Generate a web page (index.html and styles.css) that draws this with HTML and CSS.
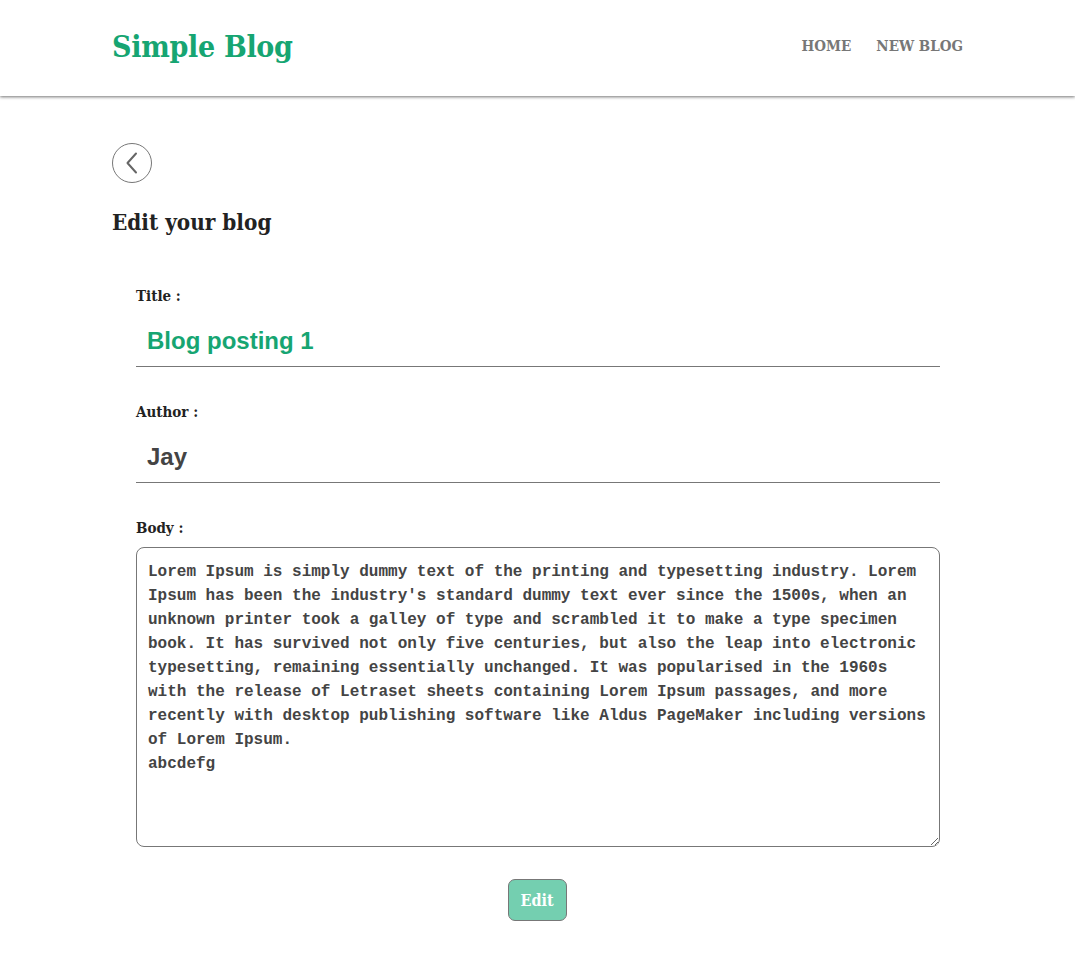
FILE: index.html
```html
<!DOCTYPE html>
<html lang="en">
<head>
<meta charset="utf-8">
<title>Simple Blog</title>
<link rel="stylesheet" href="styles.css">
</head>
<body>
<header class="navbar">
  <div class="container nav-inner">
    <a class="logo" href="#">Simple Blog</a>
    <nav class="links">
      <a href="#">HOME</a>
      <a href="#">NEW BLOG</a>
    </nav>
  </div>
</header>
<main class="container content">
  <button class="back" type="button" aria-label="Back">
    <svg width="40" height="40" viewBox="0 0 40 40"><path d="M24 10.5 L15.5 20 L24 29.5" fill="none" stroke="#666" stroke-width="2" stroke-linecap="round" stroke-linejoin="round"/></svg>
  </button>
  <h2 class="heading">Edit your blog</h2>
  <form class="form">
    <div class="group">
      <label class="label">Title :</label>
      <input class="field field-title" type="text" value="Blog posting 1">
    </div>
    <div class="group">
      <label class="label">Author :</label>
      <input class="field field-author" type="text" value="Jay">
    </div>
    <div class="group">
      <label class="label">Body :</label>
      <textarea class="body-area">Lorem Ipsum is simply dummy text of the printing and typesetting industry. Lorem Ipsum has been the industry's standard dummy text ever since the 1500s, when an unknown printer took a galley of type and scrambled it to make a type specimen book. It has survived not only five centuries, but also the leap into electronic typesetting, remaining essentially unchanged. It was popularised in the 1960s with the release of Letraset sheets containing Lorem Ipsum passages, and more recently with desktop publishing software like Aldus PageMaker including versions of Lorem Ipsum.
abcdefg</textarea>
    </div>
    <div class="actions">
      <button class="submit" type="button">Edit</button>
    </div>
  </form>
</main>
</body>
</html>
```
FILE: styles.css
```css
* { box-sizing: border-box; }
html, body { margin: 0; padding: 0; background: #fff; }
body {
  font-family: "DejaVu Serif Condensed", "DejaVu Serif", serif;
  color: #222;
}
.container {
  max-width: 851px;
  margin: 0 auto;
}
.navbar {
  height: 96px;
  background: #fff;
  box-shadow: 0 1px 3px rgba(0,0,0,0.55);
  position: relative;
}
.nav-inner {
  height: 96px;
  padding-bottom: 4px;
  display: flex;
  align-items: center;
  justify-content: space-between;
}
.logo {
  font-size: 30px;
  font-weight: bold;
  color: #16a572;
  text-decoration: none;
  letter-spacing: -0.3px;
}
.links {
  display: flex;
  gap: 25px;
}
.links a {
  font-size: 15px;
  font-weight: bold;
  color: #777;
  text-decoration: none;
}
.content {
  padding-top: 47px;
}
.back {
  width: 40px;
  height: 40px;
  border-radius: 50%;
  border: 1px solid #777;
  background: #fff;
  padding: 0;
  display: flex;
  align-items: center;
  justify-content: center;
  cursor: pointer;
}
.back svg { display: block; margin: -1px; }
.heading {
  margin: 24px 0 0;
  font-size: 22.3px;
  font-weight: bold;
  color: #222;
  line-height: 30px;
}
.form {
  padding: 49px 23px 0 24px;
  display: flex;
  flex-direction: column;
  gap: 35px;
}
.group {
  display: flex;
  flex-direction: column;
  gap: 8px;
}
.label {
  font-size: 15px;
  font-weight: bold;
  line-height: 21px;
  color: #222;
}
.field {
  border: none;
  border-bottom: 1px solid #777;
  padding: 12px 11px;
  height: 52px;
  font-family: "Liberation Sans", Arial, sans-serif;
  font-size: 24px;
  font-weight: bold;
  outline: none;
  background: transparent;
  width: 100%;
}
.field-title { color: #16a572; }
.field-author { color: #444; }
.body-area {
  width: 100%;
  height: 300px;
  border: 1px solid #777;
  border-radius: 8px;
  padding: 12px 11px 11px;
  font-family: "Liberation Mono", "Courier New", monospace;
  font-size: 16px;
  font-weight: bold;
  line-height: 24px;
  color: #444;
  resize: vertical;
  outline: none;
}
.actions {
  display: flex;
  justify-content: center;
  margin-top: -3px;
  padding-right: 2px;
}
.submit {
  width: 59px;
  height: 42px;
  background: #74cfb0;
  border: 1px solid #777;
  border-radius: 7px;
  color: #fff;
  font-family: "DejaVu Serif Condensed", "DejaVu Serif", serif;
  font-size: 16px;
  font-weight: bold;
  cursor: pointer;
}
```
